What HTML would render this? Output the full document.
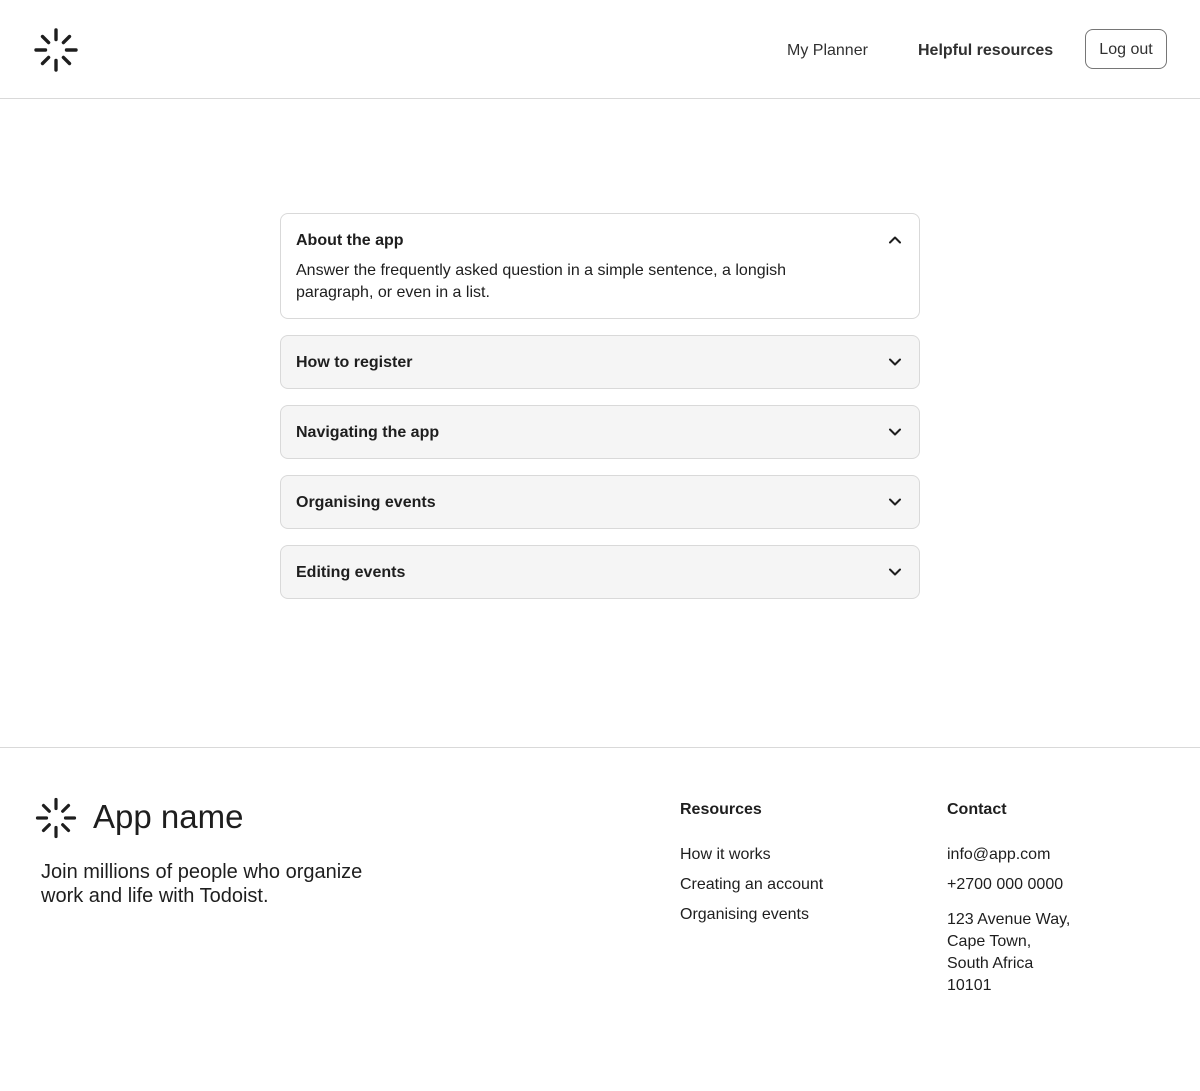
<!DOCTYPE html>
<html><head><style>
*{box-sizing:border-box;margin:0;padding:0}
body{width:1200px;height:1091px;background:#fff;font-family:"Liberation Sans",sans-serif;color:#1e1e1e;position:relative;overflow:hidden}
.hdr{position:absolute;left:0;top:0;width:1200px;height:99px;border-bottom:1px solid #d9d9d9}
.abs{position:absolute;white-space:nowrap}
.acc{position:absolute;left:280px;width:640px;border:1px solid #d9d9d9;border-radius:8px;background:#f5f5f5;height:54px}
.acc .t{position:absolute;left:15px;top:18px;font-size:16px;font-weight:bold;color:#1e1e1e}
.acc svg{position:absolute;right:17px;top:19px}
.foot{position:absolute;left:0;top:747px;width:1200px;border-top:1px solid #d9d9d9}
.fl{font-size:16px;color:#1e1e1e}
</style></head><body>
<div class="hdr"></div>
<svg class="abs" style="left:32px;top:26px" width="48" height="48" viewBox="-24 -24 48 48">
<g stroke="#1e1e1e" stroke-width="3.4" stroke-linecap="round">
<line x1="0" y1="-10.5" x2="0" y2="-20"/><line x1="0" y1="10.5" x2="0" y2="20"/>
<line x1="-10.5" y1="0" x2="-20" y2="0"/><line x1="10.5" y1="0" x2="20" y2="0"/>
<line x1="7.4" y1="-7.4" x2="13.5" y2="-13.5"/><line x1="-7.4" y1="7.4" x2="-13.5" y2="13.5"/>
<line x1="-7.4" y1="-7.4" x2="-13.5" y2="-13.5"/><line x1="7.4" y1="7.4" x2="13.5" y2="13.5"/>
</g></svg>
<div class="abs" style="left:787px;top:42px;font-size:16px;color:#303030">My Planner</div>
<div class="abs" style="left:918px;top:42px;font-size:16px;font-weight:bold;color:#303030">Helpful resources</div>
<div class="abs" style="left:1085px;top:29px;width:82px;height:40px;border:1px solid #767676;border-radius:8px;font-size:16px;text-align:center;line-height:40px;color:#303030">Log out</div>

<div class="acc" style="top:213px;height:106px;background:#fff">
<div class="t">About the app</div>
<svg width="14" height="14" viewBox="0 0 14 14"><path d="M2 9.5 L7 4.5 L12 9.5" fill="none" stroke="#1e1e1e" stroke-width="2" stroke-linecap="round" stroke-linejoin="round"/></svg>
<div class="abs" style="left:15px;top:46px;font-size:16px;line-height:22px;color:#1e1e1e;white-space:normal;width:560px">Answer the frequently asked question in a simple sentence, a longish paragraph, or even in a list.</div>
</div>
<div class="acc" style="top:335px"><div class="t">How to register</div><svg width="14" height="14" viewBox="0 0 14 14"><path d="M2 4.5 L7 9.5 L12 4.5" fill="none" stroke="#1e1e1e" stroke-width="2" stroke-linecap="round" stroke-linejoin="round"/></svg></div>
<div class="acc" style="top:405px"><div class="t">Navigating the app</div><svg width="14" height="14" viewBox="0 0 14 14"><path d="M2 4.5 L7 9.5 L12 4.5" fill="none" stroke="#1e1e1e" stroke-width="2" stroke-linecap="round" stroke-linejoin="round"/></svg></div>
<div class="acc" style="top:475px"><div class="t">Organising events</div><svg width="14" height="14" viewBox="0 0 14 14"><path d="M2 4.5 L7 9.5 L12 4.5" fill="none" stroke="#1e1e1e" stroke-width="2" stroke-linecap="round" stroke-linejoin="round"/></svg></div>
<div class="acc" style="top:545px"><div class="t">Editing events</div><svg width="14" height="14" viewBox="0 0 14 14"><path d="M2 4.5 L7 9.5 L12 4.5" fill="none" stroke="#1e1e1e" stroke-width="2" stroke-linecap="round" stroke-linejoin="round"/></svg></div>

<div class="foot"></div>
<svg class="abs" style="left:34px;top:796px" width="44" height="44" viewBox="-22 -22 44 44">
<g stroke="#1e1e1e" stroke-width="3.2" stroke-linecap="round">
<line x1="0" y1="-9.5" x2="0" y2="-18.5"/><line x1="0" y1="9.5" x2="0" y2="18.5"/>
<line x1="-9.5" y1="0" x2="-18.5" y2="0"/><line x1="9.5" y1="0" x2="18.5" y2="0"/>
<line x1="6.7" y1="-6.7" x2="12.5" y2="-12.5"/><line x1="-6.7" y1="6.7" x2="-12.5" y2="12.5"/>
<line x1="-6.7" y1="-6.7" x2="-12.5" y2="-12.5"/><line x1="6.7" y1="6.7" x2="12.5" y2="12.5"/>
</g></svg>
<div class="abs" style="left:93px;top:798px;font-size:33px;color:#1e1e1e">App name</div>
<div class="abs" style="left:41px;top:860px;font-size:20px;line-height:24px;color:#1e1e1e">Join millions of people who organize<br>work and life with Todoist.</div>

<div class="abs" style="left:680px;top:801px;font-size:16px;font-weight:bold">Resources</div>
<div class="abs fl" style="left:680px;top:846px">How it works</div>
<div class="abs fl" style="left:680px;top:876px">Creating an account</div>
<div class="abs fl" style="left:680px;top:906px">Organising events</div>

<div class="abs" style="left:947px;top:801px;font-size:16px;font-weight:bold">Contact</div>
<div class="abs fl" style="left:947px;top:846px">info@app.com</div>
<div class="abs fl" style="left:947px;top:876px">+2700 000 0000</div>
<div class="abs fl" style="left:947px;top:909px;line-height:22px">123 Avenue Way,<br>Cape Town,<br>South Africa<br>10101</div>
</body></html>
